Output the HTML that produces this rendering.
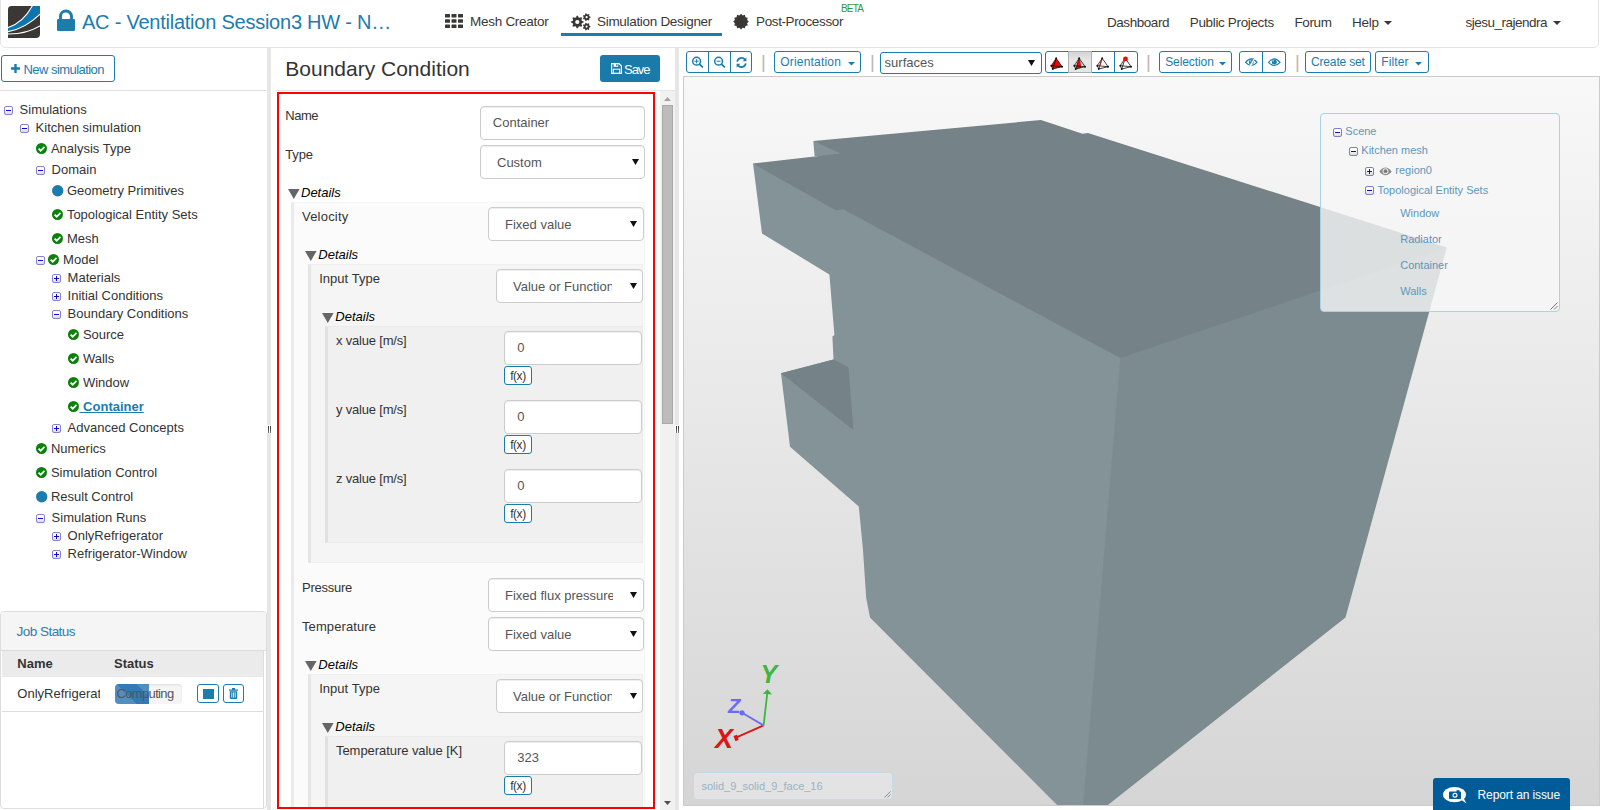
<!DOCTYPE html>
<html lang="en">
<head>
<meta charset="utf-8">
<title>SimScale - Boundary Condition</title>
<style>
html,body{margin:0;padding:0}
body{width:1600px;height:810px;overflow:hidden;background:#fff;position:relative;font-family:"Liberation Sans",sans-serif;font-size:13px;color:#333}
.t{position:absolute;white-space:pre;line-height:1;font-family:"Liberation Sans",sans-serif}
.a{position:absolute;box-sizing:border-box}
svg{position:absolute;overflow:visible}
.btn{position:absolute;box-sizing:border-box;border:1px solid #1b7cae;border-radius:3px;background:#fff}
.inp{position:absolute;box-sizing:border-box;border:1px solid #ccc;border-radius:4px;background:#fff;box-shadow:inset 0 1px 1px rgba(0,0,0,.075)}
.exp{position:absolute;box-sizing:border-box;width:9px;height:9px;border:1px solid #8383cb;border-radius:2px;background:linear-gradient(#fff 30%,#dcdcdc)}
.exp:before{content:"";position:absolute;left:1px;top:3px;width:5px;height:1px;background:#0a0ac8}
.exp.p:after{content:"";position:absolute;left:3px;top:1px;width:1px;height:5px;background:#0a0ac8}
.blk{position:absolute;box-sizing:border-box;border:1px solid rgba(0,0,0,.025);border-left:3px solid rgba(0,0,0,.06)}

</style>
</head>
<body>
<header>
<div class="a" style="left:0;top:-5px;width:1599px;height:53px;border:1px solid #e4e4e4;border-radius:5px;background:#fff"></div>
<svg style="left:8px;top:6px" width="32" height="32" viewBox="0 0 32 32"><defs><clipPath id="lg"><path d="M3.5,0H32V28a4,4 0 0 1 -4,4H0V3.5A3.5,3.5 0 0 1 3.5,0Z"/></clipPath></defs><g clip-path="url(#lg)"><rect width="32" height="32" fill="#3b3735"/><path d="M-1,21.9 Q15.5,17 25,-1.4 L34,-1.4 L34,6.3 Q17.5,23 -1,25.8 Z" fill="#0e74ad" stroke="#fff" stroke-width="1.1"/><path d="M-1,27.9 Q18,28.5 33,19.2" fill="none" stroke="#fff" stroke-width="1.1"/></g></svg>
<svg style="left:57px;top:9px" width="18" height="22" viewBox="0 0 18 22"><rect x="0" y="10" width="18" height="12" rx="1.2" fill="#1b7cae"/><path d="M3.5,11V7.5a5.5,5.5 0 0 1 11,0V11" fill="none" stroke="#1b7cae" stroke-width="2.9"/></svg>
<span class="t" style="left:82.00px;top:12.00px;font-size:20px;color:#1b7cae;letter-spacing:-0.236px;">AC - Ventilation Session3 HW - N…</span>
<svg style="left:445px;top:14px" width="18" height="14" viewBox="0 0 18 14" fill="#3b3735"><rect x="0" y="0" width="5" height="3.6" rx="0.6"/><rect x="6.5" y="0" width="5" height="3.6" rx="0.6"/><rect x="13" y="0" width="5" height="3.6" rx="0.6"/><rect x="0" y="5.2" width="5" height="3.6" rx="0.6"/><rect x="6.5" y="5.2" width="5" height="3.6" rx="0.6"/><rect x="13" y="5.2" width="5" height="3.6" rx="0.6"/><rect x="0" y="10.4" width="5" height="3.6" rx="0.6"/><rect x="6.5" y="10.4" width="5" height="3.6" rx="0.6"/><rect x="13" y="10.4" width="5" height="3.6" rx="0.6"/></svg>
<span class="t" style="left:470.00px;top:15.00px;font-size:13.5px;color:#3b3735;letter-spacing:-0.273px;">Mesh Creator</span>
<svg style="left:571px;top:13px" width="20" height="18" viewBox="0 0 20 18"><polygon points="12.57,8.38 12.57,9.62 10.80,10.36 10.45,11.22 11.17,13.00 10.30,13.87 8.52,13.15 7.66,13.50 6.92,15.27 5.68,15.27 4.94,13.50 4.08,13.15 2.30,13.87 1.43,13.00 2.15,11.22 1.80,10.36 0.03,9.62 0.03,8.38 1.80,7.64 2.15,6.78 1.43,5.00 2.30,4.13 4.08,4.85 4.94,4.50 5.68,2.73 6.92,2.73 7.66,4.50 8.52,4.85 10.30,4.13 11.17,5.00 10.45,6.78 10.80,7.64" fill="#3b3735"/><circle cx="6.3" cy="9" r="2.1" fill="#fff"/><polygon points="19.48,3.76 19.48,4.64 18.34,5.16 18.06,5.74 18.36,6.96 17.67,7.50 16.56,6.94 15.92,7.08 15.16,8.08 14.31,7.88 14.06,6.66 13.55,6.25 12.30,6.27 11.92,5.49 12.72,4.52 12.72,3.88 11.92,2.91 12.30,2.13 13.55,2.15 14.06,1.74 14.31,0.52 15.16,0.32 15.92,1.32 16.56,1.46 17.67,0.90 18.36,1.44 18.06,2.66 18.34,3.24" fill="#3b3735"/><circle cx="15.6" cy="4.2" r="1.1" fill="#fff"/><polygon points="19.48,13.16 19.48,14.04 18.34,14.56 18.06,15.14 18.36,16.36 17.67,16.90 16.56,16.34 15.92,16.48 15.16,17.48 14.31,17.28 14.06,16.06 13.55,15.65 12.30,15.67 11.92,14.89 12.72,13.92 12.72,13.28 11.92,12.31 12.30,11.53 13.55,11.55 14.06,11.14 14.31,9.92 15.16,9.72 15.92,10.72 16.56,10.86 17.67,10.30 18.36,10.84 18.06,12.06 18.34,12.64" fill="#3b3735"/><circle cx="15.6" cy="13.6" r="1.1" fill="#fff"/></svg>
<span class="t" style="left:597.00px;top:15.00px;font-size:13.5px;color:#3b3735;letter-spacing:-0.306px;">Simulation Designer</span>
<div class="a" style="left:561px;top:33px;width:161px;height:3px;background:#1b7cae"></div>
<svg style="left:733px;top:14px" width="16" height="16" viewBox="0 0 16 16"><polygon points="15.80,7.60 14.09,9.23 14.75,11.50 12.45,12.05 11.90,14.35 9.63,13.69 8.00,15.40 6.37,13.69 4.10,14.35 3.55,12.05 1.25,11.50 1.91,9.23 0.20,7.60 1.91,5.97 1.25,3.70 3.55,3.15 4.10,0.85 6.37,1.51 8.00,-0.20 9.63,1.51 11.90,0.85 12.45,3.15 14.75,3.70 14.09,5.97" fill="#3b3735"/></svg>
<span class="t" style="left:756.00px;top:15.00px;font-size:13.5px;color:#3b3735;letter-spacing:-0.377px;">Post-Processor</span>
<span class="t" style="left:841.00px;top:4.00px;font-size:10px;color:#2f9a2f;letter-spacing:-0.848px;">BETA</span>
<span class="t" style="left:1107.00px;top:16.00px;font-size:13.5px;color:#3b3735;letter-spacing:-0.450px;">Dashboard</span>
<span class="t" style="left:1189.80px;top:16.00px;font-size:13.5px;color:#3b3735;letter-spacing:-0.353px;">Public Projects</span>
<span class="t" style="left:1294.40px;top:16.00px;font-size:13.5px;color:#3b3735;letter-spacing:-0.363px;">Forum</span>
<span class="t" style="left:1352.00px;top:16.00px;font-size:13.5px;color:#3b3735;letter-spacing:-0.266px;">Help</span>
<svg style="left:1383.5px;top:21px" width="8" height="4" viewBox="0 0 8 4"><path d="M0,0H8L4,4Z" fill="#3b3735"/></svg>
<span class="t" style="left:1465.50px;top:16.00px;font-size:13.5px;color:#3b3735;letter-spacing:-0.504px;">sjesu_rajendra</span>
<svg style="left:1552.5px;top:21px" width="8" height="4" viewBox="0 0 8 4"><path d="M0,0H8L4,4Z" fill="#3b3735"/></svg>
</header>
<nav>
<div class="btn" style="left:1px;top:55px;width:114px;height:27px"></div>
<svg style="left:11px;top:64px" width="9" height="9" viewBox="0 0 9 9"><path d="M3.3,0h2.4v3.3H9v2.4H5.7V9H3.3V5.7H0V3.3H3.3Z" fill="#1b7cae"/></svg>
<span class="t" style="left:23.50px;top:63.00px;font-size:13px;color:#1b7cae;letter-spacing:-0.547px;">New simulation</span>
<div class="a" style="left:0;top:90px;width:266px;height:1px;background:#ddd"></div>
<ul style="list-style:none;margin:0;padding:0">
<li>
<i class="exp" style="left:4px;top:106px"></i>
<span class="t" style="left:19.60px;top:103.00px;font-size:13px;color:#333;">Simulations</span>
</li>
<li>
<i class="exp" style="left:20px;top:124px"></i>
<span class="t" style="left:35.60px;top:121.00px;font-size:13px;color:#333;">Kitchen simulation</span>
</li>
<li>
<svg style="left:36px;top:143px" width="11" height="11" viewBox="0 0 11 11"><circle cx="5.5" cy="5.5" r="5.5" fill="#0b800b"/><path d="M2.6,5.6L4.7,7.7L8.5,3.9" fill="none" stroke="#fff" stroke-width="1.7"/></svg>
<span class="t" style="left:50.90px;top:142.00px;font-size:13px;color:#333;">Analysis Type</span>
</li>
<li>
<i class="exp" style="left:36px;top:166px"></i>
<span class="t" style="left:51.60px;top:163.00px;font-size:13px;color:#333;">Domain</span>
</li>
<li>
<svg style="left:52px;top:185px" width="12" height="12" viewBox="0 0 12 12"><circle cx="5.7" cy="5.7" r="5.7" fill="#1b7cae"/></svg>
<span class="t" style="left:66.90px;top:184.00px;font-size:13px;color:#333;">Geometry Primitives</span>
</li>
<li>
<svg style="left:52px;top:209px" width="11" height="11" viewBox="0 0 11 11"><circle cx="5.5" cy="5.5" r="5.5" fill="#0b800b"/><path d="M2.6,5.6L4.7,7.7L8.5,3.9" fill="none" stroke="#fff" stroke-width="1.7"/></svg>
<span class="t" style="left:66.90px;top:208.00px;font-size:13px;color:#333;">Topological Entity Sets</span>
</li>
<li>
<svg style="left:52px;top:233px" width="11" height="11" viewBox="0 0 11 11"><circle cx="5.5" cy="5.5" r="5.5" fill="#0b800b"/><path d="M2.6,5.6L4.7,7.7L8.5,3.9" fill="none" stroke="#fff" stroke-width="1.7"/></svg>
<span class="t" style="left:66.90px;top:232.00px;font-size:13px;color:#333;">Mesh</span>
</li>
<li>
<i class="exp" style="left:36px;top:256px"></i>
<svg style="left:48px;top:254px" width="11" height="11" viewBox="0 0 11 11"><circle cx="5.5" cy="5.5" r="5.5" fill="#0b800b"/><path d="M2.6,5.6L4.7,7.7L8.5,3.9" fill="none" stroke="#fff" stroke-width="1.7"/></svg>
<span class="t" style="left:63.10px;top:253.00px;font-size:13px;color:#333;">Model</span>
</li>
<li>
<i class="exp p" style="left:52px;top:274px"></i>
<span class="t" style="left:67.60px;top:271.00px;font-size:13px;color:#333;">Materials</span>
</li>
<li>
<i class="exp p" style="left:52px;top:292px"></i>
<span class="t" style="left:67.60px;top:289.00px;font-size:13px;color:#333;">Initial Conditions</span>
</li>
<li>
<i class="exp" style="left:52px;top:310px"></i>
<span class="t" style="left:67.60px;top:307.00px;font-size:13px;color:#333;">Boundary Conditions</span>
</li>
<li>
<svg style="left:68px;top:329px" width="11" height="11" viewBox="0 0 11 11"><circle cx="5.5" cy="5.5" r="5.5" fill="#0b800b"/><path d="M2.6,5.6L4.7,7.7L8.5,3.9" fill="none" stroke="#fff" stroke-width="1.7"/></svg>
<span class="t" style="left:82.90px;top:328.00px;font-size:13px;color:#333;">Source</span>
</li>
<li>
<svg style="left:68px;top:353px" width="11" height="11" viewBox="0 0 11 11"><circle cx="5.5" cy="5.5" r="5.5" fill="#0b800b"/><path d="M2.6,5.6L4.7,7.7L8.5,3.9" fill="none" stroke="#fff" stroke-width="1.7"/></svg>
<span class="t" style="left:82.90px;top:352.00px;font-size:13px;color:#333;">Walls</span>
</li>
<li>
<svg style="left:68px;top:377px" width="11" height="11" viewBox="0 0 11 11"><circle cx="5.5" cy="5.5" r="5.5" fill="#0b800b"/><path d="M2.6,5.6L4.7,7.7L8.5,3.9" fill="none" stroke="#fff" stroke-width="1.7"/></svg>
<span class="t" style="left:82.90px;top:376.00px;font-size:13px;color:#333;">Window</span>
</li>
<li>
<svg style="left:68px;top:401px" width="11" height="11" viewBox="0 0 11 11"><circle cx="5.5" cy="5.5" r="5.5" fill="#0b800b"/><path d="M2.6,5.6L4.7,7.7L8.5,3.9" fill="none" stroke="#fff" stroke-width="1.7"/></svg>
<span class="t" style="left:79.50px;top:400.00px;font-size:13px;color:#1b7cae;font-weight:700;text-decoration:underline;"> Container</span>
</li>
<li>
<i class="exp p" style="left:52px;top:424px"></i>
<span class="t" style="left:67.60px;top:421.00px;font-size:13px;color:#333;">Advanced Concepts</span>
</li>
<li>
<svg style="left:36px;top:443px" width="11" height="11" viewBox="0 0 11 11"><circle cx="5.5" cy="5.5" r="5.5" fill="#0b800b"/><path d="M2.6,5.6L4.7,7.7L8.5,3.9" fill="none" stroke="#fff" stroke-width="1.7"/></svg>
<span class="t" style="left:50.90px;top:442.00px;font-size:13px;color:#333;">Numerics</span>
</li>
<li>
<svg style="left:36px;top:467px" width="11" height="11" viewBox="0 0 11 11"><circle cx="5.5" cy="5.5" r="5.5" fill="#0b800b"/><path d="M2.6,5.6L4.7,7.7L8.5,3.9" fill="none" stroke="#fff" stroke-width="1.7"/></svg>
<span class="t" style="left:50.90px;top:466.00px;font-size:13px;color:#333;">Simulation Control</span>
</li>
<li>
<svg style="left:36px;top:491px" width="12" height="12" viewBox="0 0 12 12"><circle cx="5.7" cy="5.7" r="5.7" fill="#1b7cae"/></svg>
<span class="t" style="left:50.90px;top:490.00px;font-size:13px;color:#333;">Result Control</span>
</li>
<li>
<i class="exp" style="left:36px;top:514px"></i>
<span class="t" style="left:51.60px;top:511.00px;font-size:13px;color:#333;">Simulation Runs</span>
</li>
<li>
<i class="exp p" style="left:52px;top:532px"></i>
<span class="t" style="left:67.60px;top:529.00px;font-size:13px;color:#333;">OnlyRefrigerator</span>
</li>
<li>
<i class="exp p" style="left:52px;top:550px"></i>
<span class="t" style="left:67.60px;top:547.00px;font-size:13px;color:#333;">Refrigerator-Window</span>
</li>
</ul>
<section>
<div class="a" style="left:0;top:611px;width:267px;height:198px;border:1px solid #ddd;border-radius:4px;background:#fff"></div>
<div class="a" style="left:1px;top:612px;width:265px;height:39px;background:#f5f5f5;border-bottom:1px solid #ddd;border-radius:3px 3px 0 0"></div>
<span class="t" style="left:16.60px;top:625.00px;font-size:13.5px;color:#2a80b2;letter-spacing:-0.540px;">Job Status</span>
<div class="a" style="left:1px;top:651px;width:263px;height:157px;border-right:1px solid #ddd"></div>
<div class="a" style="left:2px;top:651px;width:261px;height:26px;background:#ebebeb"></div>
<span class="t" style="left:17.30px;top:657.00px;font-size:13px;color:#333;font-weight:700;">Name</span>
<span class="t" style="left:114.00px;top:657.00px;font-size:13px;color:#333;font-weight:700;">Status</span>
<div class="a" style="left:2px;top:711px;width:261px;height:1px;background:#ddd"></div>
<div class="a" style="left:17.3px;top:686px;width:83px;height:18px;overflow:hidden">
<span class="t" style="left:0.00px;top:1.00px;font-size:13px;color:#333;">OnlyRefrigerator</span>
</div>
<div class="a" style="left:115px;top:684px;width:67px;height:20px;background:#f5f5f5;border-radius:4px;box-shadow:inset 0 1px 2px rgba(0,0,0,.1);overflow:hidden"><div class="a" style="left:0;top:0;width:34px;height:20px;background-color:#337ab7;background-image:linear-gradient(45deg,rgba(255,255,255,.15) 25%,transparent 25%,transparent 50%,rgba(255,255,255,.15) 50%,rgba(255,255,255,.15) 75%,transparent 75%,transparent);background-size:40px 40px;background-position:-18px 0"></div></div>
<span class="t" style="left:116.50px;top:687.00px;font-size:13px;color:#555;letter-spacing:-0.653px;">Computing</span>
<div class="btn" style="left:197px;top:684px;width:22px;height:19px"></div>
<div class="a" style="left:203px;top:689px;width:11px;height:10px;background:#1b7cae"></div>
<div class="btn" style="left:223px;top:684px;width:21px;height:19px"></div>
<svg style="left:229px;top:688px" width="9" height="11" viewBox="0 0 9 11"><path d="M0,1.6H9V2.8H0Z M3,0H6V1.6H3Z" fill="#1b7cae"/><path d="M0.8,3.2H8.2V10a1,1 0 0 1 -1,1H1.8a1,1 0 0 1 -1,-1Z" fill="#1b7cae"/><path d="M2.8,4.4V9.6M4.5,4.4V9.6M6.2,4.4V9.6" stroke="#fff" stroke-width="0.8"/></svg>
</section>
<div class="a" style="left:267px;top:48px;width:4px;height:762px;background:#e6e6e6"></div>
<div class="a" style="left:267px;top:425px;width:4px;height:8px;background:#fff"><div class="a" style="left:1px;top:1px;width:1px;height:7px;background:linear-gradient(#333,#777)"></div><div class="a" style="left:3px;top:1px;width:1px;height:7px;background:linear-gradient(#333,#777)"></div></div>
</nav>
<main>
<span class="t" style="left:285.30px;top:58.00px;font-size:21px;color:#333;">Boundary Condition</span>
<div class="a" style="left:275px;top:90px;width:400px;height:1px;background:#e5e5e5"></div>
<div class="a" style="left:600px;top:55px;width:60px;height:27px;border-radius:3px;background:#1a7bab"></div>
<svg style="left:611px;top:63px" width="11" height="11" viewBox="0 0 11 11"><path d="M0.6,0.6H8L10.4,3V10.4H0.6Z" fill="none" stroke="#fff" stroke-width="1.2"/><rect x="2.6" y="0.6" width="4.6" height="3.2" fill="#fff"/><rect x="5.3" y="1" width="1.2" height="2" fill="#1a7bab"/><rect x="2.3" y="6.2" width="6.4" height="4.2" fill="none" stroke="#fff" stroke-width="1"/></svg>
<span class="t" style="left:624.00px;top:63.00px;font-size:13px;color:#fff;letter-spacing:-1.035px;">Save</span>
<div class="a" style="left:660px;top:91px;width:15px;height:719px;background:#f1f1f1"></div>
<div class="a" style="left:662px;top:105px;width:11px;height:319px;background:#bcbcbc;border:1px solid #a9a9a9"></div>
<svg style="left:664px;top:97px" width="7" height="4" viewBox="0 0 7 4"><path d="M0,4H7L3.5,0Z" fill="#a3a3a3"/></svg>
<svg style="left:664px;top:801px" width="7" height="4" viewBox="0 0 7 4"><path d="M0,0H7L3.5,4Z" fill="#505050"/></svg>
<div class="a" style="left:675px;top:48px;width:4px;height:762px;background:#e6e6e6"></div>
<div class="a" style="left:675px;top:425px;width:4px;height:8px;background:#fff"><div class="a" style="left:1px;top:1px;width:1px;height:7px;background:linear-gradient(#333,#777)"></div><div class="a" style="left:3px;top:1px;width:1px;height:7px;background:linear-gradient(#333,#777)"></div></div>
<div class="a" style="left:277px;top:92px;width:378px;height:717px;border:2px solid #fe0000"></div>
<span class="t" style="left:285.20px;top:109.00px;font-size:13px;color:#333;letter-spacing:-0.422px;">Name</span>
<div class="inp" style="left:480px;top:106px;width:165px;height:34px"></div>
<span class="t" style="left:492.80px;top:116.00px;font-size:13px;color:#555;">Container</span>
<span class="t" style="left:285.30px;top:148.00px;font-size:13px;color:#333;letter-spacing:-0.172px;">Type</span>
<div class="inp" style="left:480px;top:145px;width:165px;height:34px"></div>
<div class="a" style="left:497px;top:152px;width:117px;height:20px;overflow:hidden">
<span class="t" style="left:0.00px;top:4.00px;font-size:13px;color:#555;">Custom</span>
</div>
<svg style="left:631.8px;top:159px" width="7" height="6" viewBox="0 0 7 6"><path d="M0,0H7L3.5,6Z" fill="#111"/></svg>
<svg style="left:287.7px;top:189px" width="12" height="10" viewBox="0 0 12 10"><path d="M0,0H11.6L5.8,10Z" fill="#666"/></svg>
<span class="t" style="left:301.00px;top:186.00px;font-size:13px;color:#000;font-style:italic;">Details</span>
<div class="blk" style="left:291px;top:202px;width:354px;height:610px;background:#fbfbfb"></div>
<span class="t" style="left:302.00px;top:210.00px;font-size:13px;color:#333;letter-spacing:0.211px;">Velocity</span>
<div class="inp" style="left:488px;top:207px;width:155.6px;height:34px"></div>
<div class="a" style="left:505px;top:214px;width:107.6px;height:20px;overflow:hidden">
<span class="t" style="left:0.00px;top:4.00px;font-size:13px;color:#555;">Fixed value</span>
</div>
<svg style="left:630.4px;top:221px" width="7" height="6" viewBox="0 0 7 6"><path d="M0,0H7L3.5,6Z" fill="#111"/></svg>
<svg style="left:305px;top:250.9px" width="12" height="10" viewBox="0 0 12 10"><path d="M0,0H11.6L5.8,10Z" fill="#666"/></svg>
<span class="t" style="left:318.30px;top:248.00px;font-size:13px;color:#000;font-style:italic;">Details</span>
<div class="blk" style="left:308px;top:264px;width:335px;height:299px;background:#f5f5f5"></div>
<span class="t" style="left:319.20px;top:272.00px;font-size:13px;color:#333;letter-spacing:0.032px;">Input Type</span>
<div class="inp" style="left:496px;top:269px;width:146.8px;height:34px"></div>
<div class="a" style="left:513px;top:276px;width:98.8px;height:20px;overflow:hidden">
<span class="t" style="left:0.00px;top:4.00px;font-size:13px;color:#555;">Value or Function</span>
</div>
<svg style="left:629.6px;top:283px" width="7" height="6" viewBox="0 0 7 6"><path d="M0,0H7L3.5,6Z" fill="#111"/></svg>
<svg style="left:322px;top:313px" width="12" height="10" viewBox="0 0 12 10"><path d="M0,0H11.6L5.8,10Z" fill="#666"/></svg>
<span class="t" style="left:335.30px;top:310.00px;font-size:13px;color:#000;font-style:italic;">Details</span>
<div class="blk" style="left:325px;top:326px;width:318px;height:217px;background:#f0f0f0"></div>
<span class="t" style="left:336.00px;top:334.00px;font-size:13px;color:#333;letter-spacing:-0.190px;">x value [m/s]</span>
<div class="inp" style="left:504.4px;top:331px;width:137.5px;height:34px"></div>
<span class="t" style="left:517.20px;top:341.00px;font-size:13px;color:#555;">0</span>
<div class="btn" style="left:504.4px;top:366.3px;width:28px;height:19px;border-color:#1a7bab"></div>
<span class="t" style="left:510.20px;top:370.00px;font-size:12px;color:#333;letter-spacing:-0.457px;">f(x)</span>
<span class="t" style="left:336.00px;top:403.00px;font-size:13px;color:#333;letter-spacing:-0.190px;">y value [m/s]</span>
<div class="inp" style="left:504.4px;top:400px;width:137.5px;height:34px"></div>
<span class="t" style="left:517.20px;top:410.00px;font-size:13px;color:#555;">0</span>
<div class="btn" style="left:504.4px;top:435.3px;width:28px;height:19px;border-color:#1a7bab"></div>
<span class="t" style="left:510.20px;top:439.00px;font-size:12px;color:#333;letter-spacing:-0.457px;">f(x)</span>
<span class="t" style="left:336.00px;top:472.00px;font-size:13px;color:#333;letter-spacing:-0.190px;">z value [m/s]</span>
<div class="inp" style="left:504.4px;top:469px;width:137.5px;height:34px"></div>
<span class="t" style="left:517.20px;top:479.00px;font-size:13px;color:#555;">0</span>
<div class="btn" style="left:504.4px;top:504.3px;width:28px;height:19px;border-color:#1a7bab"></div>
<span class="t" style="left:510.20px;top:508.00px;font-size:12px;color:#333;letter-spacing:-0.457px;">f(x)</span>
<span class="t" style="left:302.00px;top:581.00px;font-size:13px;color:#333;letter-spacing:-0.254px;">Pressure</span>
<div class="inp" style="left:488px;top:578px;width:155.6px;height:34px"></div>
<div class="a" style="left:505px;top:585px;width:107.6px;height:20px;overflow:hidden">
<span class="t" style="left:0.00px;top:4.00px;font-size:13px;color:#555;">Fixed flux pressure</span>
</div>
<svg style="left:630.4px;top:592px" width="7" height="6" viewBox="0 0 7 6"><path d="M0,0H7L3.5,6Z" fill="#111"/></svg>
<span class="t" style="left:302.00px;top:620.00px;font-size:13px;color:#333;letter-spacing:0.092px;">Temperature</span>
<div class="inp" style="left:488px;top:617px;width:155.6px;height:34px"></div>
<div class="a" style="left:505px;top:624px;width:107.6px;height:20px;overflow:hidden">
<span class="t" style="left:0.00px;top:4.00px;font-size:13px;color:#555;">Fixed value</span>
</div>
<svg style="left:630.4px;top:631px" width="7" height="6" viewBox="0 0 7 6"><path d="M0,0H7L3.5,6Z" fill="#111"/></svg>
<svg style="left:305px;top:661.2px" width="12" height="10" viewBox="0 0 12 10"><path d="M0,0H11.6L5.8,10Z" fill="#666"/></svg>
<span class="t" style="left:318.30px;top:658.00px;font-size:13px;color:#000;font-style:italic;">Details</span>
<div class="blk" style="left:308px;top:674px;width:335px;height:138px;background:#f5f5f5"></div>
<span class="t" style="left:319.20px;top:682.00px;font-size:13px;color:#333;letter-spacing:0.032px;">Input Type</span>
<div class="inp" style="left:496px;top:679px;width:146.8px;height:34px"></div>
<div class="a" style="left:513px;top:686px;width:98.8px;height:20px;overflow:hidden">
<span class="t" style="left:0.00px;top:4.00px;font-size:13px;color:#555;">Value or Function</span>
</div>
<svg style="left:629.6px;top:693px" width="7" height="6" viewBox="0 0 7 6"><path d="M0,0H7L3.5,6Z" fill="#111"/></svg>
<svg style="left:322px;top:723px" width="12" height="10" viewBox="0 0 12 10"><path d="M0,0H11.6L5.8,10Z" fill="#666"/></svg>
<span class="t" style="left:335.30px;top:720.00px;font-size:13px;color:#000;font-style:italic;">Details</span>
<div class="blk" style="left:325px;top:736px;width:318px;height:76px;background:#f0f0f0"></div>
<span class="t" style="left:336.00px;top:744.00px;font-size:13px;color:#333;letter-spacing:-0.057px;">Temperature value [K]</span>
<div class="inp" style="left:504.4px;top:741px;width:137.5px;height:34px"></div>
<span class="t" style="left:517.20px;top:751.00px;font-size:13px;color:#555;">323</span>
<div class="btn" style="left:504.4px;top:776.3px;width:28px;height:19px;border-color:#1a7bab"></div>
<span class="t" style="left:510.20px;top:780.00px;font-size:12px;color:#333;letter-spacing:-0.457px;">f(x)</span>
<div class="a" style="left:279px;top:807px;width:374px;height:3px;background:#fff"></div>
<div class="a" style="left:277px;top:807px;width:378px;height:2px;background:#fe0000"></div>
</main>
<section>
<div class="btn" style="left:686px;top:51px;width:66px;height:22px;"></div>
<div class="a" style="left:708px;top:51px;width:1px;height:22px;background:#1b7cae"></div>
<div class="a" style="left:730px;top:51px;width:1px;height:22px;background:#1b7cae"></div>
<svg style="left:692px;top:56px" width="12" height="12" viewBox="0 0 12 12"><circle cx="4.6" cy="5.2" r="3.9" fill="none" stroke="#1b7cae" stroke-width="1.5"/><path d="M7.7,8.3L10.4,10.9" stroke="#1b7cae" stroke-width="1.8" stroke-linecap="round"/><path d="M2.5,5.2H6.7M4.6,3.1V7.3" stroke="#1b7cae" stroke-width="1"/></svg>
<svg style="left:714px;top:56px" width="12" height="12" viewBox="0 0 12 12"><circle cx="4.6" cy="5.2" r="3.9" fill="none" stroke="#1b7cae" stroke-width="1.5"/><path d="M7.7,8.3L10.4,10.9" stroke="#1b7cae" stroke-width="1.8" stroke-linecap="round"/><path d="M2.5,5.2H6.7" stroke="#1b7cae" stroke-width="1"/></svg>
<svg style="left:735.5px;top:56.5px" width="11" height="11" viewBox="0 0 11 11"><path d="M1.2,4.6A4.4,4.4 0 0 1 9,2.6" fill="none" stroke="#1b7cae" stroke-width="1.7"/><path d="M10.4,0.4V4.2H6.6Z" fill="#1b7cae"/><path d="M9.8,6.4A4.4,4.4 0 0 1 2,8.4" fill="none" stroke="#1b7cae" stroke-width="1.7"/><path d="M0.6,10.6V6.8H4.4Z" fill="#1b7cae"/></svg>
<span class="t" style="left:761.10px;top:53.00px;font-size:18.5px;color:#c4b3ad;">|</span>
<div class="btn" style="left:774px;top:51px;width:87px;height:22px;"></div>
<span class="t" style="left:780.30px;top:56.00px;font-size:12px;color:#1b7cae;letter-spacing:0.182px;">Orientation</span>
<svg style="left:848px;top:62.3px" width="7" height="4" viewBox="0 0 7 4"><path d="M0,0H7L3.5,3.6Z" fill="#1b7cae"/></svg>
<span class="t" style="left:870.10px;top:53.00px;font-size:18.5px;color:#c4b3ad;">|</span>
<div class="a" style="left:880px;top:52px;width:162px;height:22px;border:1px solid #1b7cae;border-radius:3px;background:#fff"></div>
<span class="t" style="left:884.60px;top:56.00px;font-size:13px;color:#555;">surfaces</span>
<svg style="left:1028px;top:59.6px" width="7" height="6" viewBox="0 0 7 6"><path d="M0,0H7L3.5,6Z" fill="#111"/></svg>
<div class="btn" style="left:1045.2px;top:51px;width:92.7px;height:22px;"></div>
<div class="a" style="left:1068.2px;top:51px;width:23.6px;height:22px;background:linear-gradient(#d4d4d4,#e6e6e6 40%);border:1px solid #adadad;border-width:1px 1px 1px 1px"></div>
<div class="a" style="left:1114.2px;top:51px;width:1px;height:22px;background:#1b7cae"></div>
<svg style="left:1045.2px;top:51px" width="23" height="22" viewBox="0 0 23 22"><polygon points="11.2,7.3 6.3,14.7 7.7,18 17.1,15.7" fill="#f00"/><g fill="none" stroke="#111" stroke-width="0.8"><polygon points="11.2,7.3 6.3,14.7 7.7,18 17.1,15.7"/><path d="M11.2,7.3L7.7,18 M6.3,14.7L17.1,15.7"/></g><circle cx="11.2" cy="7.3" r="0.95" fill="#111"/><circle cx="6.3" cy="14.7" r="0.95" fill="#111"/><circle cx="7.7" cy="18" r="0.95" fill="#111"/><circle cx="17.1" cy="15.7" r="0.95" fill="#111"/></svg>
<svg style="left:1068.2px;top:51px" width="23" height="22" viewBox="0 0 23 22"><polygon points="11.2,7.3 7.7,18 13.2,16.7 12.6,11.1" fill="#f00"/><g fill="none" stroke="#111" stroke-width="0.8"><polygon points="11.2,7.3 6.3,14.7 7.7,18 17.1,15.7"/><path d="M11.2,7.3L7.7,18 M6.3,14.7L17.1,15.7"/></g><circle cx="11.2" cy="7.3" r="0.95" fill="#111"/><circle cx="6.3" cy="14.7" r="0.95" fill="#111"/><circle cx="7.7" cy="18" r="0.95" fill="#111"/><circle cx="17.1" cy="15.7" r="0.95" fill="#111"/></svg>
<svg style="left:1091.2px;top:51px" width="23" height="22" viewBox="0 0 23 22"><g fill="none" stroke="#111" stroke-width="0.8"><polygon points="11.2,7.3 6.3,14.7 7.7,18 17.1,15.7"/><path d="M11.2,7.3L7.7,18 M6.3,14.7L17.1,15.7"/></g><path d="M10.9,8.8L8.1,16.5" stroke="#f00" stroke-width="0.9"/><circle cx="11.2" cy="7.3" r="0.95" fill="#111"/><circle cx="6.3" cy="14.7" r="0.95" fill="#111"/><circle cx="7.7" cy="18" r="0.95" fill="#111"/><circle cx="17.1" cy="15.7" r="0.95" fill="#111"/></svg>
<svg style="left:1114.2px;top:51px" width="23" height="22" viewBox="0 0 23 22"><g fill="none" stroke="#111" stroke-width="0.8"><polygon points="11.2,7.3 6.3,14.7 7.7,18 17.1,15.7"/><path d="M11.2,7.3L7.7,18 M6.3,14.7L17.1,15.7"/></g><circle cx="6.3" cy="14.7" r="0.95" fill="#111"/><circle cx="7.7" cy="18" r="0.95" fill="#111"/><circle cx="17.1" cy="15.7" r="0.95" fill="#111"/><circle cx="11.5" cy="7.9" r="2.4" fill="#f00"/></svg>
<span class="t" style="left:1146.10px;top:53.00px;font-size:18.5px;color:#c4b3ad;">|</span>
<div class="btn" style="left:1159px;top:51px;width:73px;height:22px;"></div>
<span class="t" style="left:1165.20px;top:56.00px;font-size:12px;color:#1b7cae;letter-spacing:-0.086px;">Selection</span>
<svg style="left:1219px;top:62.3px" width="7" height="4" viewBox="0 0 7 4"><path d="M0,0H7L3.5,3.6Z" fill="#1b7cae"/></svg>
<div class="btn" style="left:1239.4px;top:51px;width:46.3px;height:22px;"></div>
<div class="a" style="left:1262px;top:51px;width:1px;height:22px;background:#1b7cae"></div>
<svg style="left:1244.5px;top:57.6px" width="13" height="9" viewBox="0 0 13 9"><path d="M0.6,4.4Q6.3,-2.6 12,4.4Q6.3,10.6 0.6,4.4Z" fill="#fff" stroke="#1b7cae" stroke-width="1.15"/><circle cx="6.3" cy="3.9" r="2.5" fill="#1b7cae"/><circle cx="5.3" cy="2.9" r="0.6" fill="#fff"/><path d="M3.4,9.2L8.4,-0.4L10.6,-0.4L5.6,9.2Z" fill="#fff"/><path d="M3.4,9.2L9.2,0L7.6,0.4Z" fill="#1b7cae"/></svg>
<svg style="left:1267.6px;top:57.6px" width="13" height="9" viewBox="0 0 13 9"><path d="M0.6,4.4Q6.3,-2.6 12,4.4Q6.3,10.6 0.6,4.4Z" fill="#fff" stroke="#1b7cae" stroke-width="1.15"/><circle cx="6.3" cy="3.9" r="2.5" fill="#1b7cae"/><circle cx="5.3" cy="2.9" r="0.6" fill="#fff"/></svg>
<span class="t" style="left:1295.10px;top:53.00px;font-size:18.5px;color:#c4b3ad;">|</span>
<div class="btn" style="left:1305px;top:51px;width:65.6px;height:22px;"></div>
<span class="t" style="left:1311.00px;top:56.00px;font-size:12px;color:#1b7cae;letter-spacing:-0.156px;">Create set</span>
<div class="btn" style="left:1375.3px;top:51px;width:53.5px;height:22px;"></div>
<span class="t" style="left:1381.30px;top:56.00px;font-size:12px;color:#1b7cae;letter-spacing:0.121px;">Filter</span>
<svg style="left:1415px;top:62.3px" width="7" height="4" viewBox="0 0 7 4"><path d="M0,0H7L3.5,3.6Z" fill="#1b7cae"/></svg>
<div class="a" style="left:683px;top:76px;width:917px;height:730px;background:linear-gradient(#f8f8f8,#d5d5d5);border:1px solid #cbcbcb;overflow:hidden">
<svg style="left:-1px;top:-1px" width="917" height="730" viewBox="0 0 917 730" shape-rendering="geometricPrecision"><polygon points="70.0,87.6 117.0,94.0 317.0,124.0 441.0,276.0 407.0,736.0 381.0,736.0 187.0,541.4 183.2,522.0 180.0,474.0 175.8,430.4 107.0,370.7 98.0,297.2 150.5,283.4 149.4,260.4 151.4,259.0 146.4,198.4 79.0,157.6" fill="#839398"/><polygon points="130.3,65.1 159.0,76.0 159.0,80.0 131.6,79.9" fill="#839398"/><polygon points="437.3,282.1 436.0,269.0 717.0,169.0 763.8,171.5 662.5,541.4 416.0,736.0 399.5,736.0" fill="#7c8b8f"/><polygon points="70.0,87.6 157.7,77.5 130.3,65.1 358.0,44.0 399.5,57.8 405.0,57.0 763.8,171.5 437.3,282.1 160.2,133.2 152.8,134.2" fill="#758287"/><polygon points="98.0,297.2 150.5,283.4 165.5,291.4 170.4,354.0" fill="#758287"/></svg>
</div>
<svg style="left:700px;top:650px" width="100" height="110" viewBox="0 0 100 110"><path d="M63.6,75.4L36,87.6" stroke="#dc1414" stroke-width="1.8"/><path d="M33.5,86l3.5,-1.2l1.6,5.2l-3.2,1.2Z" fill="#dc1414"/><path d="M63.6,75.4L42,62.8" stroke="#6c6cee" stroke-width="1.8"/><circle cx="42" cy="62.8" r="2.6" fill="#6c6cee"/><path d="M63.6,75.4L67.3,43" stroke="#3fb53f" stroke-width="1.8"/><path d="M67.6,39.2L72,44.6L62.8,43.8Z" fill="#3fb53f"/></svg>
<span class="t" style="left:760.50px;top:662.00px;font-size:25px;color:#3fb53f;font-weight:700;font-style:italic;letter-spacing:-1.688px;">Y</span>
<span class="t" style="left:728.00px;top:696.00px;font-size:20.5px;color:#6c6cee;font-weight:700;font-style:italic;letter-spacing:0.769px;">Z</span>
<span class="t" style="left:715.00px;top:726.00px;font-size:27px;color:#dc1414;font-weight:700;font-style:italic;letter-spacing:-0.516px;">X</span>
<div class="a" style="left:693px;top:772px;width:200px;height:28px;border:1px solid #c3dbe6;border-radius:4px;background:rgba(255,255,255,.32)"></div>
<span class="t" style="left:701.50px;top:781.00px;font-size:11px;color:#98b4c4;">solid_9_solid_9_face_16</span>
<svg style="left:884px;top:791px" width="7" height="7" viewBox="0 0 7 7"><path d="M0.5,6.5L6.5,0.5M3.5,6.5L6.5,3.5" stroke="#777" stroke-width="0.8"/></svg>
<aside>
<div class="a" style="left:1320.2px;top:113px;width:239.6px;height:199px;border:1px solid #a8d3e4;border-radius:4px;background:rgba(246,246,246,.8)"></div>
<i class="exp" style="left:1333px;top:128px;border-color:#7d7dc8"></i>
<span class="t" style="left:1345.30px;top:126.00px;font-size:11px;color:#5d97b9;">Scene</span>
<i class="exp" style="left:1349px;top:147px;border-color:#7d7dc8"></i>
<span class="t" style="left:1361.30px;top:145.00px;font-size:11px;color:#5d97b9;">Kitchen mesh</span>
<i class="exp p" style="left:1365px;top:167px;border-color:#7d7dc8"></i>
<svg style="left:1378.6px;top:167.2px" width="13" height="9" viewBox="0 0 13 9"><path d="M0.3,4.4Q6.5,-3.4 12.7,4.4Q6.5,12 0.3,4.4Z" fill="#8a8a8a"/><circle cx="6.5" cy="4.2" r="2.9" fill="#e8e8e8"/><circle cx="6.5" cy="4.2" r="1.9" fill="#7a7a7a"/></svg>
<span class="t" style="left:1395.30px;top:165.00px;font-size:11px;color:#5d97b9;">region0</span>
<i class="exp" style="left:1365px;top:186px;border-color:#7d7dc8"></i>
<span class="t" style="left:1377.50px;top:185.00px;font-size:11px;color:#5d97b9;">Topological Entity Sets</span>
<span class="t" style="left:1400.20px;top:208.00px;font-size:11px;color:#5d97b9;">Window</span>
<span class="t" style="left:1400.20px;top:234.00px;font-size:11px;color:#5d97b9;">Radiator</span>
<span class="t" style="left:1400.20px;top:260.00px;font-size:11px;color:#5d97b9;">Container</span>
<span class="t" style="left:1400.20px;top:286.00px;font-size:11px;color:#5d97b9;">Walls</span>
<svg style="left:1550px;top:302px" width="8" height="8" viewBox="0 0 8 8"><path d="M0.5,7.5L7.5,0.5M4,7.5L7.5,4" stroke="#555" stroke-width="0.8"/></svg>
</aside>
<div class="a" style="left:1433px;top:778px;width:137px;height:34px;border-radius:3px 3px 0 0;background:#005c99"></div>
<svg style="left:1443px;top:787px" width="25" height="17" viewBox="0 0 25 17"><ellipse cx="11.5" cy="7.6" rx="11.5" ry="7.6" fill="#fff"/><path d="M17,12L23.5,16.5L20,10Z" fill="#fff"/><rect x="6" y="4.4" width="12" height="7.6" rx="0.8" fill="#005c99"/><rect x="13.5" y="3.2" width="3" height="2" fill="#005c99"/><circle cx="12" cy="8.2" r="2.5" fill="#fff"/><circle cx="12" cy="8.2" r="1.3" fill="#005c99"/></svg>
<span class="t" style="left:1477.50px;top:789.00px;font-size:12px;color:#fff;letter-spacing:-0.103px;">Report an issue</span>
</section>
</body>
</html>
